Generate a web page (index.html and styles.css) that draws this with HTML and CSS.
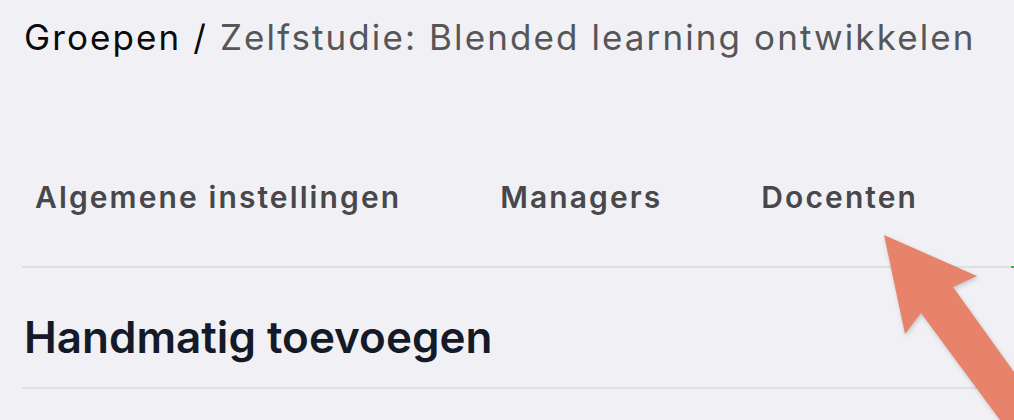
FILE: index.html
```html
<!DOCTYPE html>
<html lang="nl">
<head>
  <meta charset="UTF-8" />
  <meta name="viewport" content="width=device-width, initial-scale=1" />
  <title>Zelfstudie: Blended learning ontwikkelen</title>
  <link rel="stylesheet" href="styles.css">
</head>
<body>
<div class="page">
  <div class="breadcrumb">
    <span class="crumb-root">Groepen /</span>
    <span class="crumb-current">Zelfstudie: Blended learning ontwikkelen</span>
  </div>

  <nav class="tabs">
    <a class="tab">Algemene instellingen</a>
    <a class="tab">Managers</a>
    <a class="tab">Docenten</a>
    <span class="tab-active-bar"></span>
  </nav>

  <div class="section">
    <h2>Handmatig toevoegen</h2>
  </div>
</div>

<svg class="pointer" width="160" height="200" viewBox="0 0 160 200">
  <polygon points="30,15 123,56 99,67 160,152 160,200 146,200 67,93 51,114" fill="#e7836a" />
</svg>
</body>
</html>
```

FILE: styles.css
```css
* { box-sizing: border-box; }
body {
  margin: 0;
  background: #f1f1f5;
  font-family: Inter, 'Noto Sans', sans-serif;
  overflow: hidden;
}
.page {
  padding: 16px 0 0 22px;
}
.breadcrumb {
  font-size: 35px;
  line-height: 42px;
  letter-spacing: 2.1px;
  padding-left: 2px;
}
.crumb-root {
  color: #0a0a0a;
}
.crumb-current {
  color: #565659;
}
.tabs {
  position: relative;
  display: flex;
  gap: 99px;
  margin-top: 121px;
  padding: 0 0 51px 13px;
  border-bottom: 2px solid #dedee3;
}
.tab {
  font-size: 30px;
  font-weight: 600;
  letter-spacing: 2.1px;
  color: #48484b;
  line-height: 36px;
}
.tab-active-bar {
  position: absolute;
  right: 0;
  bottom: -2px;
  width: 3px;
  height: 2px;
  background: #3fae4f;
}
.section {
  border-bottom: 2px solid #dedee3;
  padding: 43px 0 24px 2px;
}
.section h2 {
  margin: 0;
  font-size: 44px;
  font-weight: 600;
  line-height: 52px;
  color: #151a28;
}
.pointer {
  position: absolute;
  left: 854px;
  top: 220px;
  filter: drop-shadow(1px 2px 2px rgba(0, 0, 0, 0.18));
}
```
